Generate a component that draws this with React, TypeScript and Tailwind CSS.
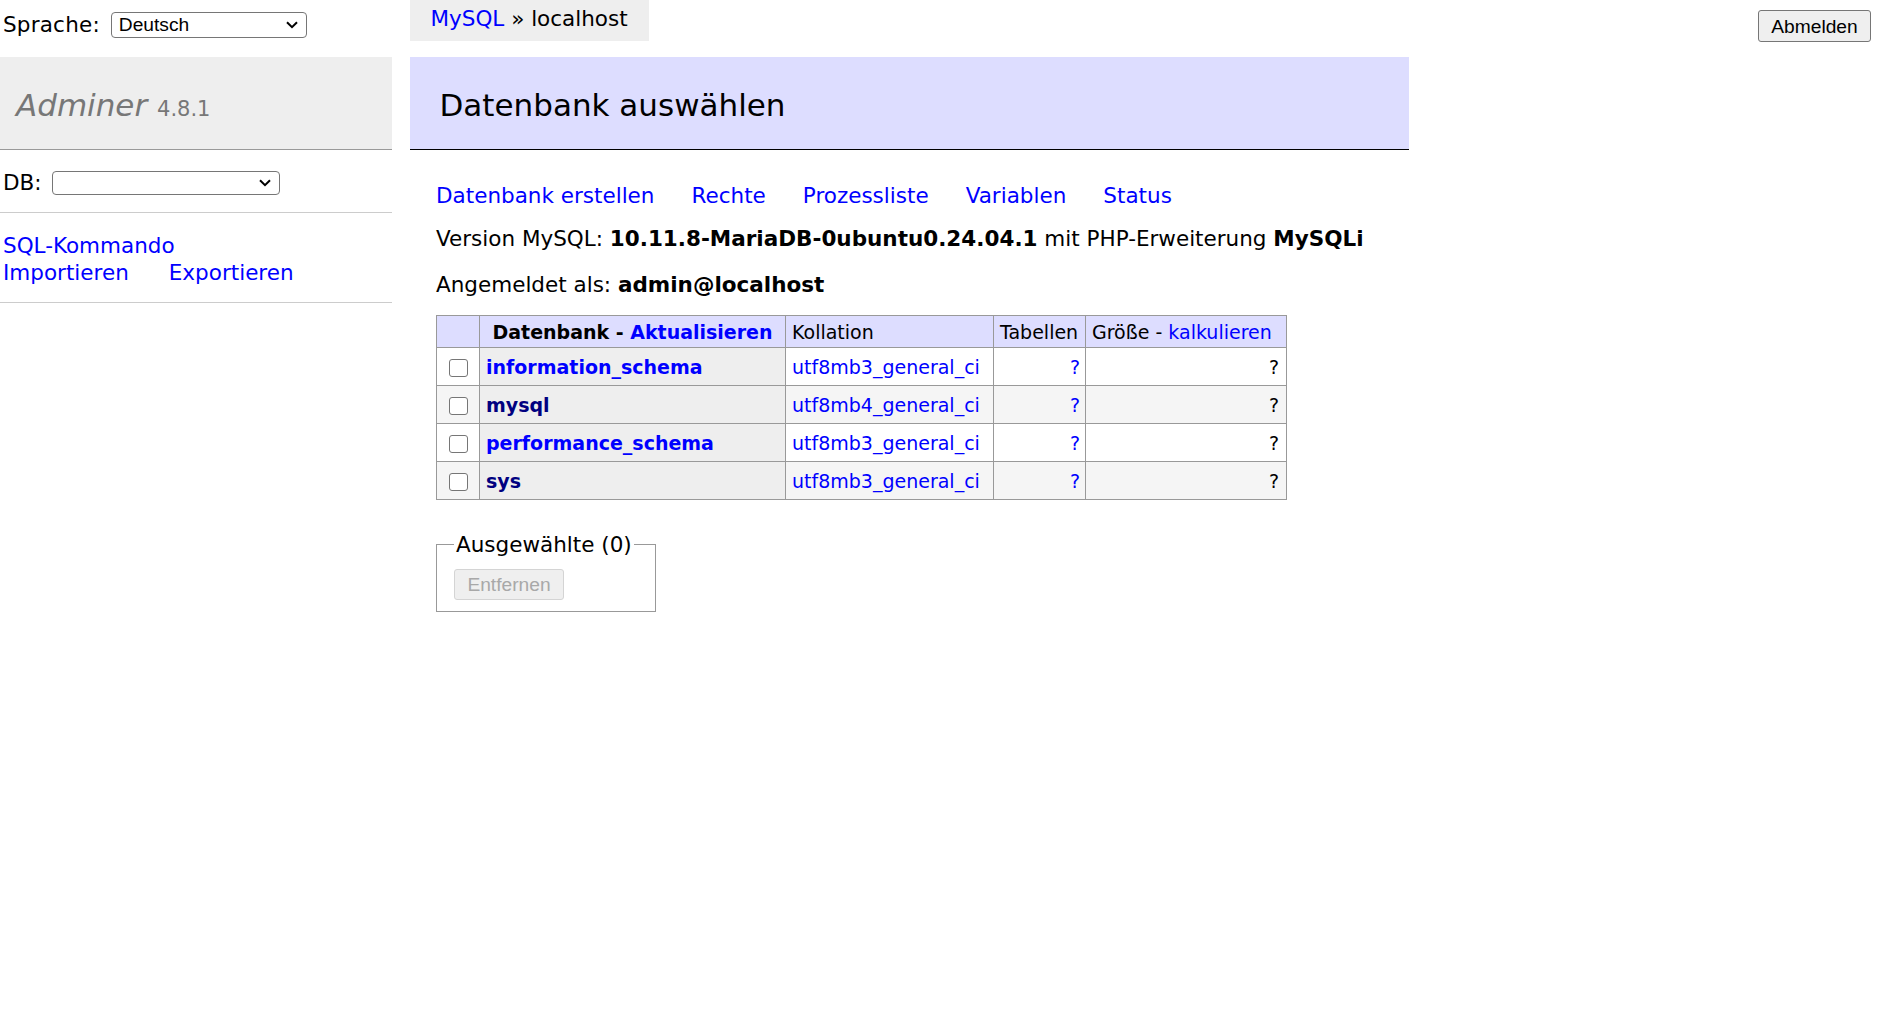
import React from 'react';

const databases = [
  { name: 'information_schema', collation: 'utf8mb3_general_ci', visited: false },
  { name: 'mysql', collation: 'utf8mb4_general_ci', visited: true },
  { name: 'performance_schema', collation: 'utf8mb3_general_ci', visited: false },
  { name: 'sys', collation: 'utf8mb3_general_ci', visited: true },
];

function Chevron() {
  return (
    <svg width="12" height="8" viewBox="0 0 12 8" className="shrink-0">
      <polyline points="1,1.2 6,6.2 11,1.2" fill="none" stroke="#000" strokeWidth="2" />
    </svg>
  );
}

function FakeSelect({ value, className }: { value: string; className: string }) {
  return (
    <div
      className={`flex items-center justify-between rounded-[4px] border border-[#767676] bg-white pl-[7px] pr-[8px] font-['Liberation_Sans',Arial,sans-serif] text-[19.2px] leading-[22px] text-black ${className}`}
    >
      <span>{value}</span>
      <Chevron />
    </div>
  );
}

export default function App() {
  return (
    <div className="min-h-screen bg-white font-['DejaVu_Sans',Verdana,sans-serif] text-[21.5px] leading-[27px] text-black">
      <div className="flex items-start">
        {/* left menu */}
        <aside className="w-[392px] shrink-0">
          <div className="flex h-[57px] items-start gap-[11px] pl-[3px] pt-[12px]">
            <span className="leading-[26px] tracking-[0.2px]">Sprache:</span>
            <FakeSelect value="Deutsch" className="h-[26px] w-[196px]" />
          </div>
          <div className="h-[93px] border-b border-[#999] bg-[#eee] pl-[16px] pt-[29px] text-[31px] leading-[38px] text-[#777]">
            <span className="italic">Adminer</span> <span className="text-[21px]">4.8.1</span>
          </div>
          <div className="flex h-[63px] items-center gap-[10px] border-b border-[#ccc] pl-[3px] pt-[3px]">
            <span>DB:</span>
            <FakeSelect value="" className="h-[24px] w-[228px]" />
          </div>
          <div className="border-b border-[#ccc] pb-[16px] pl-[3px] pt-[19px] text-[#00f]">
            <a className="block">SQL-Kommando</a>
            <div className="flex gap-[40px]">
              <a>Importieren</a>
              <a>Exportieren</a>
            </div>
          </div>
        </aside>

        {/* content */}
        <main className="ml-[17.5px] shrink-0">
          <div className="flex">
            <div className="h-[41px] bg-[#eee] px-[21px] leading-[37px]">
              <a className="text-[#00f]">MySQL</a> » localhost
            </div>
          </div>
          <h2 className="mt-[16px] w-[999px] border-b border-black bg-[#ddf] pb-[25px] pl-[30px] pt-[29px] text-[31px] font-normal leading-[38px]">
            Datenbank auswählen
          </h2>

          <div className="pl-[26.5px]">
            <div className="mt-[32px] flex gap-[37px] text-[#00f]">
              <a>Datenbank erstellen</a>
              <a>Rechte</a>
              <a>Prozessliste</a>
              <a>Variablen</a>
              <a>Status</a>
            </div>
            <p className="mt-[16px]">
              Version MySQL: <b>10.11.8-MariaDB-0ubuntu0.24.04.1</b> mit PHP-Erweiterung <b>MySQLi</b>
            </p>
            <p className="mt-[18.5px]">
              Angemeldet als: <b>admin@localhost</b>
            </p>

            <table className="mt-[17.5px] w-[850px] table-fixed border-collapse text-[19px] leading-[24px]">
              <colgroup>
                <col className="w-[43px]" />
                <col className="w-[306px]" />
                <col className="w-[208px]" />
                <col className="w-[92px]" />
                <col className="w-[201px]" />
              </colgroup>
              <thead>
                <tr className="h-[32px] bg-[#ddf]">
                  <td className="border border-[#999]"></td>
                  <th className="border border-[#999] px-[9px] text-center font-bold">
                    Datenbank - <a className="text-[#00f]">Aktualisieren</a>
                  </th>
                  <td className="border border-[#999] px-[6px]">Kollation</td>
                  <td className="border border-[#999] px-[6px]">Tabellen</td>
                  <td className="border border-[#999] px-[6px]">
                    Größe - <a className="text-[#00f]">kalkulieren</a>
                  </td>
                </tr>
              </thead>
              <tbody>
                {databases.map((db, i) => (
                  <tr key={db.name} className={`h-[38px] ${i % 2 ? 'bg-[#f5f5f5]' : 'bg-white'}`}>
                    <td className="border border-[#999] text-center">
                      <span className="inline-block h-[18px] w-[19px] rounded-[3px] border border-[#767676] bg-white align-middle" />
                    </td>
                    <th className="border border-[#999] bg-[#eee] px-[6px] text-left font-bold">
                      <a className={db.visited ? 'text-[#000080]' : 'text-[#00f]'}>{db.name}</a>
                    </th>
                    <td className="border border-[#999] px-[6px] text-[#00f]">{db.collation}</td>
                    <td className="border border-[#999] pr-[5px] text-right text-[#00f]">?</td>
                    <td className="border border-[#999] pr-[7px] text-right">?</td>
                  </tr>
                ))}
              </tbody>
            </table>

            <fieldset className="mt-[31px] w-[220px] border border-[#999] px-[17px] pb-[11px]">
              <legend className="px-[2px]">Ausgewählte (0)</legend>
              <button
                disabled
                className="mt-[11px] block h-[31px] w-[110px] rounded-[3px] border border-[#d4d4d4] bg-[#efefef] font-['Liberation_Sans',Arial,sans-serif] text-[19.2px] text-[#a8a8a8]"
              >
                Entfernen
              </button>
            </fieldset>
          </div>
        </main>

        <button className="ml-auto mr-[29px] mt-[10px] h-[32px] w-[113px] shrink-0 rounded-[3px] border border-[#767676] bg-[#efefef] font-['Liberation_Sans',Arial,sans-serif] text-[19.2px]">
          Abmelden
        </button>
      </div>
    </div>
  );
}
